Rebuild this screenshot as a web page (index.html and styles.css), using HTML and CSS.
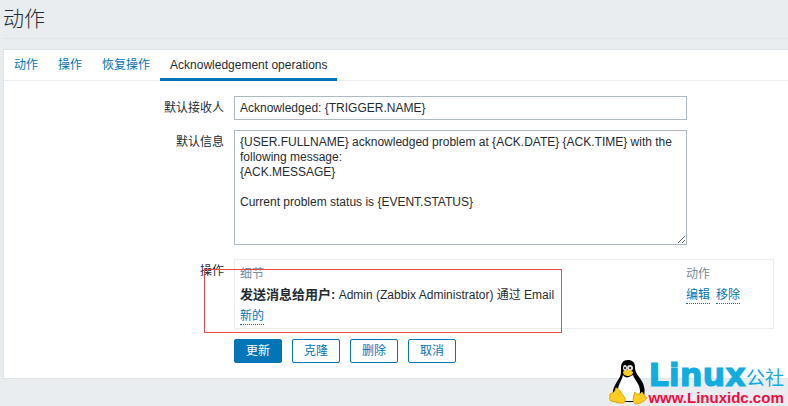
FILE: index.html
```html
<!DOCTYPE html>
<html lang="zh-CN">
<head>
    <meta charset="UTF-8">
    <meta name="viewport" content="width=device-width, initial-scale=1.0">
    <title>动作</title>
    <link rel="stylesheet" href="styles.css">
</head>
<body>

    <header class="page-header">
        <h1>动作</h1>
    </header>

    <main class="panel">
        <!-- Tabs -->
        <nav class="tabs">
            <a href="#">动作</a>
            <a href="#">操作</a>
            <a href="#">恢复操作</a>
            <a href="#" class="active">Acknowledgement operations</a>
        </nav>

        <form class="form">
            <div class="row">
                <label for="subject">默认接收人</label>
                <input type="text" id="subject" class="field" value="Acknowledged: {TRIGGER.NAME}">
            </div>

            <div class="row">
                <label for="message">默认信息</label>
                <textarea id="message" class="field">{USER.FULLNAME} acknowledged problem at {ACK.DATE} {ACK.TIME} with the following message:
{ACK.MESSAGE}

Current problem status is {EVENT.STATUS}</textarea>
            </div>

            <div class="row row-operations">
                <span class="label">操作</span>
                <div class="operations">
                    <table>
                        <thead>
                            <tr><th>细节</th><th class="actions">动作</th></tr>
                        </thead>
                        <tbody>
                            <tr>
                                <td><b>发送消息给用户:</b> Admin (Zabbix Administrator) 通过 Email</td>
                                <td class="actions"><a href="#" class="link">编辑</a><a href="#" class="link">移除</a></td>
                            </tr>
                            <tr><td colspan="2"><a href="#" class="link">新的</a></td></tr>
                        </tbody>
                    </table>
                    <div class="highlight"></div>
                </div>
            </div>

            <div class="buttons">
                <button type="submit" class="primary">更新</button>
                <button type="button">克隆</button>
                <button type="button">删除</button>
                <button type="button">取消</button>
            </div>
        </form>
    </main>

    <!-- Watermark -->
    <div class="watermark">
        <svg class="tux" width="39" height="46" viewBox="0 0 39 46" aria-hidden="true">
            <path d="M19 1c-5 0-7 3-7 8 0 6 0 8-3 12-3 5-6 9-5 16l9 6h14l8-6c2-8-1-14-5-19-3-4-4-6-4-10 0-5-3-7-7-7z" fill="#000"/>
            <path d="M14 16c1 2 4 3 6 2l4-2c1 4 7 9 7 16 0 5-2 9-6 10H14l-5-11c0-5 4-10 5-15z" fill="#fff"/>
            <ellipse cx="16" cy="9" rx="2" ry="3" fill="#ddd"/>
            <ellipse cx="21" cy="9" rx="3" ry="3" fill="#ddd"/>
            <circle cx="16" cy="9" r="1" fill="#000"/>
            <circle cx="21" cy="9" r="1" fill="#000"/>
            <path d="M14 13c2-3 6-3 10 0 0 3-3 4-5 4s-5-1-5-4z" fill="#fc2"/>
            <path d="M7 29c3 0 6 6 9 10 1 4-1 6-5 5l-9-2c-2-2-1-4-1-7 3-1 5-2 6-6zM26 33c1 3 5 3 7 0 2 3 3 5 5 6-1 2-7 6-11 6-4-1-3-7-1-12z" fill="#fc2" stroke="#d9a400"/>
        </svg>
        <div class="brand">
            <div class="brand-name"><b>Linux</b><span>公社</span></div>
            <div class="brand-url">www.Linuxidc.com</div>
        </div>
    </div>

</body>
</html>
```

FILE: styles.css
```css
* {
    box-sizing: border-box;
}

body {
    margin: 0;
    padding: 0 0 0 3px;
    background-color: #e9edf0;
    color: #1f2c33;
    font-family: "Liberation Sans", Arial, "Noto Sans CJK SC", sans-serif;
    font-size: 12px;
    line-height: 18px;
}

.page-header {
    height: 39px;
    margin-bottom: 10px;
    padding-top: 4px;
    border-bottom: 1px solid #dfe4e7;
}

h1 {
    margin: 0;
    font-size: 21px;
    font-weight: 300;
    line-height: 30px;
}

a {
    color: #0275b8;
    text-decoration: none;
}

.panel {
    background-color: #fff;
    border: 1px solid #dfe4e7;
    border-right: none;
}

/* Tabs */
.tabs {
    display: flex;
    border-bottom: 1px solid #ebeef0;
}

.tabs a {
    padding: 6px 10px 4px;
    margin-bottom: -1px;
    line-height: 18px;
    border-bottom: 3px solid transparent;
}

.tabs .active {
    color: #1f2c33;
    border-bottom-color: #0275b8;
}

/* Form */
.form {
    padding: 15px 13px 15px 0;
}

.row {
    display: flex;
    gap: 10px;
    margin-bottom: 10px;
}

.row-operations {
    margin-top: 14px;
}

.row label,
.row .label {
    flex: 0 0 220px;
    padding-top: 3px;
    text-align: right;
}

.field {
    flex: 0 1 453px;
    min-width: 0;
    margin: 0;
    padding: 4px 5px;
    border: 1px solid #acbbc2;
    border-radius: 0;
    background-color: #fff;
    color: #1f2c33;
    font: inherit;
    line-height: 15px;
}

input.field {
    height: 24px;
}

textarea.field {
    height: 115px;
    resize: both;
}

.operations {
    position: relative;
    flex: 1;
    max-width: 540px;
    padding: 3px 5px 2px;
    border: 1px solid #ebeef0;
}

table {
    width: 100%;
    border-collapse: collapse;
}

th,
td {
    height: 21px;
    padding: 0;
    text-align: left;
    white-space: nowrap;
}

th {
    color: #768d99;
    font-weight: normal;
}

td b {
    font-size: 13px;
}

.actions {
    width: 82px;
}

.link {
    display: inline-block;
    margin-right: 6px;
    line-height: 15px;
    border-bottom: 1px dotted #0275b8;
}

/* Red frame over the details */
.highlight {
    position: absolute;
    top: 9px;
    left: -31px;
    width: 358px;
    height: 64px;
    border: 1px solid #ec4a4a;
    pointer-events: none;
}

.buttons {
    display: flex;
    gap: 10px;
    padding-left: 230px;
}

button {
    width: 48px;
    height: 24px;
    padding: 0;
    border: 1px solid #0275b8;
    border-radius: 2px;
    background-color: #fff;
    color: #0275b8;
    font: inherit;
    cursor: pointer;
}

.primary {
    background-color: #0275b8;
    color: #fff;
}

/* Watermark */
.watermark {
    position: absolute;
    right: 4px;
    bottom: 0;
    display: flex;
    align-items: flex-start;
    white-space: nowrap;
}

.tux {
    margin-top: 1px;
}

.brand-name {
    display: flex;
    align-items: flex-end;
    height: 31px;
    color: #12addf;
}

.brand-name b {
    font-family: "DejaVu Sans", sans-serif;
    font-size: 32px;
    line-height: 28px;
    -webkit-text-stroke: 1px #12addf;
}

.brand-name span {
    font-size: 19px;
    line-height: 20px;
}

.brand-url {
    color: #f5093f;
    font-size: 15px;
    font-weight: bold;
    line-height: 17px;
}
```
